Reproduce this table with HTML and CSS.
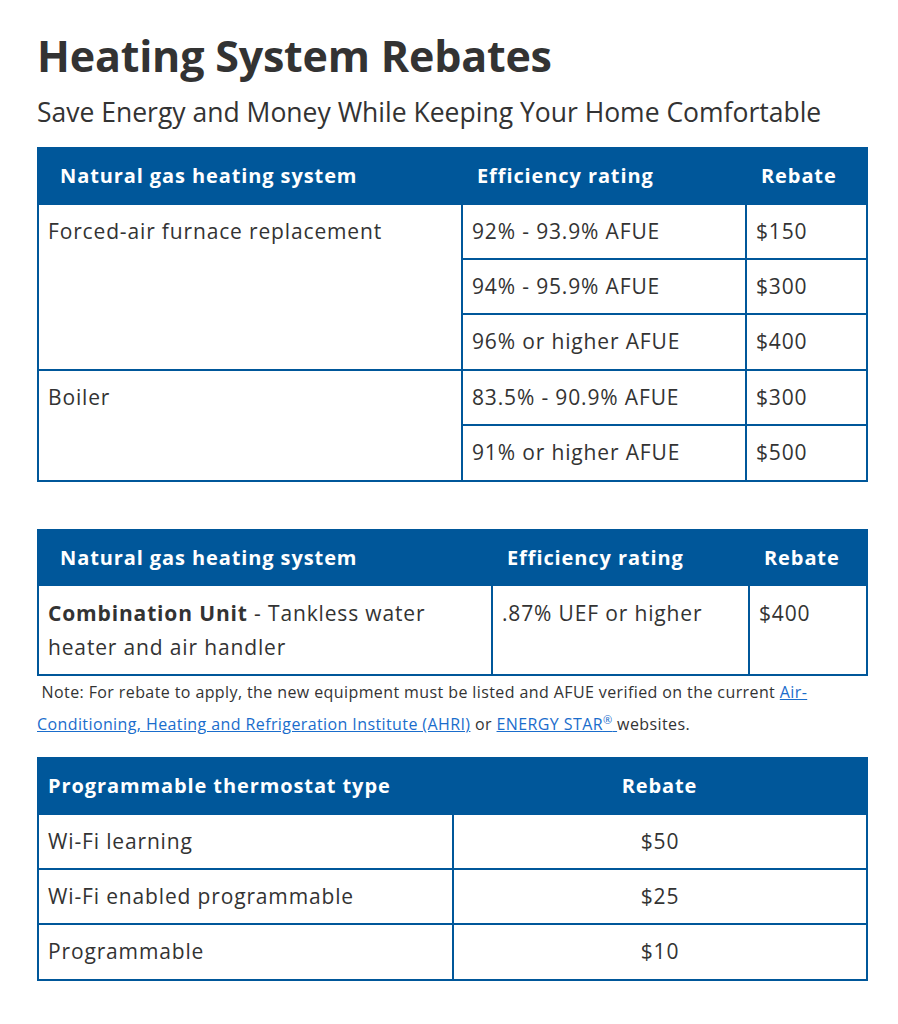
FILE: index.html
```html
<!DOCTYPE html>
<html>
<head>
<meta charset="utf-8">
<link rel="stylesheet" href="styles.css">
</head>
<body>
<div class="page">
  <h1 class="title">Heating System Rebates</h1>
  <p class="subtitle">Save Energy and Money While Keeping Your Home Comfortable</p>

  <table class="rt t1">
    <colgroup><col class="c1a"><col class="c1b"><col class="c1c"></colgroup>
    <thead>
      <tr><th class="h-first">Natural gas heating system</th><th class="h-mid">Efficiency rating</th><th class="h-mid">Rebate</th></tr>
    </thead>
    <tbody>
      <tr><td rowspan="3">Forced-air furnace replacement</td><td>92% - 93.9% AFUE</td><td>$150</td></tr>
      <tr><td>94% - 95.9% AFUE</td><td>$300</td></tr>
      <tr><td>96% or higher AFUE</td><td>$400</td></tr>
      <tr><td rowspan="2">Boiler</td><td>83.5% - 90.9% AFUE</td><td>$300</td></tr>
      <tr><td>91% or higher AFUE</td><td>$500</td></tr>
    </tbody>
  </table>

  <table class="rt t2">
    <colgroup><col class="c2a"><col class="c2b"><col class="c2c"></colgroup>
    <thead>
      <tr><th class="h-first">Natural gas heating system</th><th class="h-mid">Efficiency rating</th><th class="h-mid">Rebate</th></tr>
    </thead>
    <tbody>
      <tr><td class="tall"><strong>Combination Unit</strong> - Tankless water heater and air handler</td><td class="tall">.87% UEF or higher</td><td class="tall">$400</td></tr>
    </tbody>
  </table>

  <p class="note">&nbsp;Note: For rebate to apply, the new equipment must be listed and AFUE verified on the current <a href="#">Air-Conditioning, Heating and Refrigeration Institute (AHRI)</a> or <a href="#">ENERGY STAR<sup>®</sup>&nbsp;</a>websites.</p>

  <table class="rt t3">
    <colgroup><col class="c3a"><col class="c3b"></colgroup>
    <thead>
      <tr><th class="h-left">Programmable thermostat type</th><th class="h-center">Rebate</th></tr>
    </thead>
    <tbody>
      <tr><td>Wi-Fi learning</td><td class="center">$50</td></tr>
      <tr><td>Wi-Fi enabled programmable</td><td class="center">$25</td></tr>
      <tr><td>Programmable</td><td class="center">$10</td></tr>
    </tbody>
  </table>
</div>
</body>
</html>
```

FILE: styles.css
```css
html, body {
  margin: 0;
  padding: 0;
  background: #ffffff;
}

body {
  font-family: "Open Sans", "Liberation Sans", sans-serif;
  color: #333333;
}

.page {
  width: 829px;
  padding: 28px 0 40px 37px;
}

.title {
  margin: 0;
  font-size: 43px;
  line-height: 56px;
  font-weight: 700;
  color: #333333;
  letter-spacing: -0.2px;
}

.subtitle {
  margin: 5px 0 12px 0;
  font-size: 26.5px;
  line-height: 46px;
  color: #333333;
}

.rt {
  width: 829px;
  border-collapse: collapse;
  table-layout: fixed;
  border: 2px solid #00579a;
}

.rt th {
  background: #00579a;
  color: #ffffff;
  font-size: 20px;
  font-weight: 700;
  letter-spacing: 0.9px;
  height: 53.5px;
  text-align: left;
  padding: 0;
  border: none;
  vertical-align: middle;
}

.rt td {
  font-size: 21px;
  letter-spacing: 0.85px;
  height: 53.4px;
  padding: 0 9px;
  border: 2px solid #00579a;
  vertical-align: top;
  line-height: 53.4px;
}

.rt .h-first { padding-left: 21px; }
.rt .h-mid { padding-left: 15px; }
.rt .h-left { padding-left: 9px; }
.rt .h-center { text-align: center; }
.rt td.center { text-align: center; }

.c1a { width: 424px; }
.c1b { width: 284px; }
.c1c { width: 121px; }

.c2a { width: 454px; }
.c2b { width: 257px; }
.c2c { width: 118px; }

.c3a { width: 415px; }
.c3b { width: 414px; }

.t1 { margin-bottom: 47px; }

.rt td.tall {
  height: 66px;
  line-height: 34px;
  padding-top: 10px;
  padding-bottom: 10px;
}

.rt td strong { font-weight: 700; }

.note {
  margin: 0 0 17px 0;
  font-size: 16px;
  letter-spacing: 0.4px;
  line-height: 32px;
  color: #333333;
}

.note a {
  color: #1a6dcc;
  text-decoration: underline;
}

.note sup {
  font-size: 11px;
  line-height: 0;
}
```
